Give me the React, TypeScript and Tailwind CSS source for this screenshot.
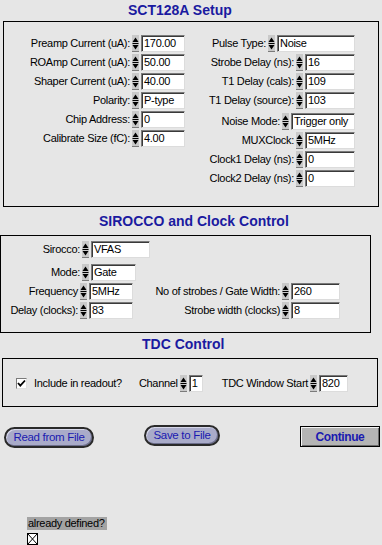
import React from 'react';

const LBL = "font-['Liberation_Sans',sans-serif] text-[11px] tracking-[-0.3px] leading-none text-black whitespace-nowrap";

const Spinner = () => (
  <svg width="7" height="17" viewBox="0 0 7 17" className="shrink-0">
    <rect x="0" y="0" width="7" height="17" fill="#c9c9c9" />
    <path d="M0.5 7 L3.5 2.5 L6.5 7 Z" fill="#000" />
    <rect x="0.5" y="8" width="6" height="1" fill="#000" />
    <path d="M0.5 10 L6.5 10 L3.5 14.5 Z" fill="#000" />
    <rect x="0" y="16" width="7" height="1" fill="#7a7a7a" />
  </svg>
);

interface FieldProps {
  label: string;
  value: string;
  inputClass: string;
  labelClass?: string;
}

const Field: React.FC<FieldProps> = ({ label, value, inputClass, labelClass = '' }) => (
  <div className="flex items-center h-[19px]">
    <span className={`${LBL} ${labelClass}`}>{label}</span>
    <div className="ml-[2px]"><Spinner /></div>
    <div
      className={`ml-[2px] h-[17px] bg-white border border-t-[#7a7a7a] border-l-[#7a7a7a] border-r-[#dcdcdc] border-b-[#dcdcdc] shadow-[inset_1px_1px_0_#3a3a3a] pl-[2px] flex items-center ${LBL} ${inputClass}`}
    >
      {value}
    </div>
  </div>
);

const leftSetup = [
  ['Preamp Current (uA):', '170.00'],
  ['ROAmp Current (uA):', '50.00'],
  ['Shaper Current (uA):', '40.00'],
  ['Polarity:', 'P-type'],
  ['Chip Address:', '0'],
  ['Calibrate Size (fC):', '4.00'],
];

const rightTop = [
  ['Pulse Type:', 'Noise', 'w-[78px]'],
  ['Strobe Delay (ns):', '16', 'w-[50px]'],
  ['T1 Delay (cals):', '109', 'w-[50px]'],
  ['T1 Delay (source):', '103', 'w-[50px]'],
];

const rightBottom = [
  ['Noise Mode:', 'Trigger only', 'w-[64px]'],
  ['MUXClock:', '5MHz', 'w-[50px]'],
  ['Clock1 Delay (ns):', '0', 'w-[50px]'],
  ['Clock2 Delay (ns):', '0', 'w-[50px]'],
];

const Title: React.FC<{ className: string; children: React.ReactNode }> = ({ className, children }) => (
  <div className={`font-['Liberation_Sans',sans-serif] text-[14px] font-bold leading-[17px] text-[#1a1aa0] ${className}`}>
    {children}
  </div>
);

const PILL = "h-[21px] rounded-full border-2 border-[#2a2a2a] bg-[#a9abc9] shadow-[inset_1px_1px_0_#d6d7e8,inset_-1px_-1px_0_#6c6e8c] font-['Liberation_Sans',sans-serif] text-[11.5px] tracking-[-0.3px] leading-none text-[#1a1ab0]";

export default function App() {
  return (
    <div className="w-[382px] h-[545px] bg-[#e6e6e6] overflow-hidden">
      {/* SCT128A */}
      <Title className="h-[21px] pl-[128px] pt-[2px]">SCT128A Setup</Title>
      <div className="ml-[3px] w-[376px] h-[186px] border border-black pt-[12px] flex">
        <div className="w-[181px] flex flex-col items-end">
          {leftSetup.map(([l, v]) => (
            <Field key={l} label={l} value={v} inputClass="w-[44px]" />
          ))}
        </div>
        <div className="w-[170px] flex flex-col items-end">
          {rightTop.map(([l, v, w]) => (
            <Field key={l} label={l} value={v} inputClass={w} />
          ))}
          <div className="mt-[2px] flex flex-col items-end">
            {rightBottom.map(([l, v, w]) => (
              <Field key={l} label={l} value={v} inputClass={w} />
            ))}
          </div>
        </div>
      </div>

      {/* SIROCCO */}
      <Title className="h-[28px] pl-[99px] pt-[6px]">SIROCCO and Clock Control</Title>
      <div className="w-[371px] h-[98px] border border-black pt-[4px] pl-[1px]">
        <Field label="Sirocco:" value="VFAS" labelClass="w-[78px] text-right" inputClass="w-[59px]" />
        <div className="mt-[4px]">
          <Field label="Mode:" value="Gate" labelClass="w-[78px] text-right" inputClass="w-[45px]" />
        </div>
        <div className="flex">
          <div className="w-[131px]">
            <Field label="Frequency" value="5MHz" labelClass="w-[78px] text-right" inputClass="w-[45px]" />
          </div>
          <div className="w-[207px] flex justify-end">
            <Field label="No of strobes / Gate Width:" value="260" inputClass="w-[49px]" />
          </div>
        </div>
        <div className="flex">
          <div className="w-[131px]">
            <Field label="Delay (clocks):" value="83" labelClass="w-[78px] text-right" inputClass="w-[45px]" />
          </div>
          <div className="w-[207px] flex justify-end">
            <Field label="Strobe width (clocks)" value="8" inputClass="w-[49px]" />
          </div>
        </div>
      </div>

      {/* TDC */}
      <Title className="h-[25px] pl-[142px] pt-[3px]">TDC Control</Title>
      <div className="ml-[2px] w-[376px] h-[49px] border border-black pt-[15px]">
        <div className="flex items-center h-[19px]">
          <div className="ml-[13px] w-[11px] h-[11px] bg-white border border-t-[#7a7a7a] border-l-[#7a7a7a] border-r-[#e0e0e0] border-b-[#e0e0e0] flex items-center justify-center">
            <svg width="9" height="9" viewBox="0 0 9 9">
              <path d="M1 4 L3.3 6.6 L8 1.5" stroke="#000" strokeWidth="1.8" fill="none" />
            </svg>
          </div>
          <span className={`ml-[7px] ${LBL}`}>Include in readout?</span>
          <div className="ml-[17px]">
            <Field label="Channel" value="1" inputClass="w-[14px]" />
          </div>
          <div className="ml-[19px]">
            <Field label="TDC Window Start" value="820" inputClass="w-[29px]" />
          </div>
        </div>
      </div>

      {/* Buttons */}
      <div className="flex items-start mt-[18px]">
        <button className={`ml-[4px] mt-[2px] w-[90px] ${PILL}`}>Read from File</button>
        <button className={`ml-[50px] w-[76px] ${PILL}`}>Save to File</button>
        <button className="ml-[80px] mt-[1px] w-[80px] h-[21px] border border-black bg-[#b4b4b4] shadow-[inset_1px_1px_0_#f4f4f4,inset_-1px_-1px_0_#6a6a6a] font-['Liberation_Sans',sans-serif] text-[12px] tracking-[-0.4px] font-bold leading-none text-[#1a1ab0]">
          Continue
        </button>
      </div>

      {/* already defined */}
      <div className="ml-[27px] mt-[69px]">
        <div className={`w-[80px] h-[13px] bg-[#a3a3a3] pl-[1px] flex items-center ${LBL}`}>already defined?</div>
        <div className="mt-[3px] w-[11px] h-[12px] bg-white border border-black flex items-center justify-center">
          <svg width="9" height="10" viewBox="0 0 9 10">
            <path d="M0 0 L9 10 M9 0 L0 10" stroke="#000" strokeWidth="1" />
          </svg>
        </div>
      </div>
    </div>
  );
}
